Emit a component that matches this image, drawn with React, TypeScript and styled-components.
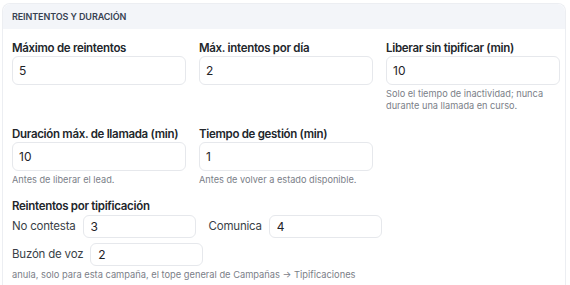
import styled, { createGlobalStyle } from 'styled-components';

const GlobalStyle = createGlobalStyle`
    * { box-sizing: border-box; }
    body {
        margin: 0;
        background: #ffffff;
        font-family: Inter, 'Liberation Sans', sans-serif;
        color: #1f2937;
    }
`;

type Field = {
    label: string;
    value: string;
    hint?: string;
};

const fields: Field[] = [
    { label: 'Máximo de reintentos', value: '5' },
    { label: 'Máx. intentos por día', value: '2' },
    {
        label: 'Liberar sin tipificar (min)',
        value: '10',
        hint: 'Solo el tiempo de inactividad; nunca durante una llamada en curso.',
    },
    {
        label: 'Duración máx. de llamada (min)',
        value: '10',
        hint: 'Antes de liberar el lead.',
    },
    {
        label: 'Tiempo de gestión (min)',
        value: '1',
        hint: 'Antes de volver a estado disponible.',
    },
];

const App = () => {
    return (
        <>
            <GlobalStyle />
            <Page>
                <Card>
                    <CardHeader>Reintentos y duración</CardHeader>
                    <CardBody>
                        <FieldsGrid>
                            {fields.map((field) => (
                                <FieldBox key={field.label}>
                                    <Label>{field.label}</Label>
                                    <Input defaultValue={field.value} />
                                    {field.hint && <Hint>{field.hint}</Hint>}
                                </FieldBox>
                            ))}
                        </FieldsGrid>

                        <Section>
                            <Label>Reintentos por tipificación</Label>
                            <InlineRow>
                                <InlineField>
                                    <InlineLabel>No contesta</InlineLabel>
                                    <SmallInput defaultValue="3" />
                                </InlineField>
                                <InlineField>
                                    <InlineLabel>Comunica</InlineLabel>
                                    <SmallInput defaultValue="4" />
                                </InlineField>
                            </InlineRow>
                            <InlineRow>
                                <InlineField>
                                    <InlineLabel>Buzón de voz</InlineLabel>
                                    <SmallInput defaultValue="2" />
                                </InlineField>
                            </InlineRow>
                            <Footnote>
                                anula, solo para esta campaña, el tope general de
                                Campañas → Tipificaciones
                            </Footnote>
                        </Section>
                    </CardBody>
                </Card>
            </Page>
        </>
    );
};

export default App;

const Page = styled.div`
    padding: 3px 4px 0 2px;
    height: 285px;
    overflow: hidden;
`;

const Card = styled.div`
    border: 1px solid #eceef2;
    border-bottom: none;
    border-radius: 8px 8px 0 0;
    background: #ffffff;
`;

const CardHeader = styled.div`
    background: #f3f5f9;
    border-radius: 8px 8px 0 0;
    height: 25px;
    padding: 0 9px;
    display: flex;
    align-items: center;
    font-size: 9px;
    font-weight: 600;
    letter-spacing: -0.1px;
    text-transform: uppercase;
    color: #374151;
`;

const CardBody = styled.div`
    padding: 11px 7px 6px 9px;
    display: flex;
    flex-direction: column;
`;

const FieldsGrid = styled.div`
    display: grid;
    grid-template-columns: repeat(3, 174px);
    column-gap: 13px;
    row-gap: 15px;
`;

const FieldBox = styled.div`
    display: flex;
    flex-direction: column;
`;

const Label = styled.div`
    font-size: 11.5px;
    line-height: 16px;
    font-weight: 600;
    letter-spacing: -0.3px;
    color: #22262b;
`;

const Input = styled.input`
    width: 100%;
    height: 29px;
    border: 1px solid #e6e8ec;
    border-radius: 6px;
    padding: 0 6px;
    font-family: inherit;
    font-size: 12px;
    color: #1f2328;
    background: #ffffff;
    outline: none;
`;

const Hint = styled.div`
    margin-top: 3px;
    font-size: 9.2px;
    line-height: 11.5px;
    color: #7b8088;
`;

const Section = styled.div`
    margin-top: 12px;
    display: flex;
    flex-direction: column;
`;

const InlineRow = styled.div`
    display: flex;
    gap: 13px;
    margin-top: 1px;

    & + & {
        margin-top: 5px;
    }
`;

const InlineField = styled.div`
    display: flex;
    align-items: center;
    gap: 7px;
`;

const InlineLabel = styled.span`
    font-size: 11.5px;
    letter-spacing: -0.2px;
    color: #3a3f47;
    white-space: nowrap;
`;

const SmallInput = styled(Input)`
    width: 113px;
    height: 23px;
    padding: 0 7px;
`;

const Footnote = styled.div`
    margin-top: 3px;
    font-size: 9.3px;
    line-height: 11px;
    color: #7b8088;
`;
